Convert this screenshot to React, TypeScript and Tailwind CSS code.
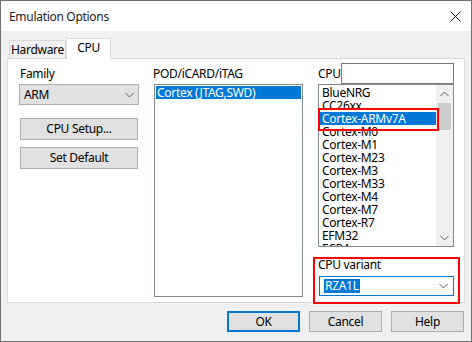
import React from 'react';

const cpus = [
  'BlueNRG',
  'CC26xx',
  'Cortex-ARMv7A',
  'Cortex-M0',
  'Cortex-M1',
  'Cortex-M23',
  'Cortex-M3',
  'Cortex-M33',
  'Cortex-M4',
  'Cortex-M7',
  'Cortex-R7',
  'EFM32',
  'ECP4',
];

const Chevron = ({ up = false }: { up?: boolean }) => (
  <svg width="9" height="6" viewBox="0 0 9 6" className="block">
    <path
      d={up ? 'M0.5 5 L4.5 1 L8.5 5' : 'M0.5 1 L4.5 5 L8.5 1'}
      fill="none"
      stroke="#606060"
      strokeWidth="1"
    />
  </svg>
);

const WinButton = ({ label, primary = false, className = '' }: { label: string; primary?: boolean; className?: string }) => (
  <div
    className={`flex items-center justify-center bg-[#e1e1e1] ${
      primary ? 'border-2 border-[#0078d7]' : 'border border-[#adadad]'
    } ${className}`}
  >
    {label}
  </div>
);

export default function App() {
  return (
    <div
      className="relative w-[472px] h-[342px] flex flex-col border border-[#6f6f6f] bg-[#f0f0f0] text-[12px] leading-[16px] tracking-[-0.3px] text-black overflow-hidden"
      style={{ fontFamily: '"Noto Sans", "Liberation Sans", sans-serif' }}
    >
      {/* Title bar */}
      <div className="h-[30px] bg-white flex items-center justify-between pl-[8px] pr-[10px] shrink-0">
        <span className="text-[12px] text-[#1a1a1a] pt-[1px]">Emulation Options</span>
        <svg width="11" height="11" viewBox="0 0 11 11">
          <path d="M0.5 0.5 L10.5 10.5 M10.5 0.5 L0.5 10.5" stroke="#111" strokeWidth="1" />
        </svg>
      </div>

      {/* Tabs */}
      <div className="flex items-end h-[20px] mt-[7px] ml-[8px] relative z-10">
        <div className="w-[57px] h-[18px] border border-b-0 border-[#d9d9d9] bg-[#f0f0f0] flex items-center justify-center pt-[1px]">
          Hardware
        </div>
        <div className="w-[45px] h-[21px] -mb-px border border-b-0 border-[#d9d9d9] bg-white flex items-start justify-center pt-[1px]">
          CPU
        </div>
      </div>

      {/* Panel */}
      <div className="ml-[6px] w-[458px] h-[245px] border border-[#d9d9d9] bg-white flex shrink-0">
        {/* Family column */}
        <div className="ml-[11px] w-[120px] pt-[7px] flex flex-col">
          <span className="ml-[1px]">Family</span>
          <div className="mt-[2px] h-[21px] border border-[#adadad] bg-[#e1e1e1] flex items-center justify-between pl-[4px] pr-[4px]">
            <span>ARM</span>
            <Chevron />
          </div>
          <WinButton label="CPU Setup..." className="ml-[1px] w-[118px] h-[22px] mt-[13px]" />
          <WinButton label="Set Default" className="ml-[1px] w-[118px] h-[22px] mt-[7px]" />
        </div>

        {/* POD column */}
        <div className="ml-[14px] w-[150px] pt-[7px] flex flex-col">
          <span>POD/iCARD/iTAG</span>
          <div className="mt-[2px] ml-[1px] h-[213px] border border-[#828790] bg-white p-[1px]">
            <div className="h-[13px] leading-[13px] bg-[#0078d7] text-white pl-[1px]">Cortex (JTAG,SWD)</div>
          </div>
        </div>

        {/* CPU column */}
        <div className="ml-[15px] w-[136px] pt-[4px] flex flex-col">
          <div className="flex items-center h-[21px]">
            <span className="w-[23px]">CPU</span>
            <div className="flex-1 h-[21px] border border-[#7a7a7a] bg-white" />
          </div>
          <div className="h-[163px] border border-[#828790] bg-white flex">
            <div className="flex-1 overflow-hidden pt-[1px] pl-[1px]">
              {cpus.map((c) => (
                <div
                  key={c}
                  className={`h-[13px] leading-[13px] pl-[2px] whitespace-nowrap ${
                    c === 'Cortex-ARMv7A' ? 'bg-[#0078d7] text-white' : ''
                  }`}
                >
                  {c}
                </div>
              ))}
            </div>
            <div className="w-[17px] bg-[#f0f0f0] flex flex-col items-center">
              <div className="h-[17px] flex items-center justify-center">
                <Chevron up />
              </div>
              <div className="w-[13px] h-[27px] mt-[1px] bg-[#cdcdcd]" />
              <div className="flex-1" />
              <div className="h-[17px] flex items-center justify-center">
                <Chevron />
              </div>
            </div>
          </div>
          <span className="mt-[10px]">CPU variant</span>
          <div className="mt-[3px] ml-[1px] h-[20px] border border-[#0078d7] bg-white flex items-center justify-between pl-[4px] pr-[5px]">
            <span className="bg-[#0078d7] text-white leading-[14px] px-[1px]">RZA1L</span>
            <Chevron />
          </div>
        </div>
      </div>

      {/* Bottom buttons */}
      <div className="flex justify-end gap-[9px] mt-[8px] mr-[7px]">
        <WinButton label="OK" primary className="w-[73px] h-[21px]" />
        <WinButton label="Cancel" className="w-[73px] h-[21px]" />
        <WinButton label="Help" className="w-[73px] h-[21px]" />
      </div>

      {/* Red annotation boxes */}
      <div className="absolute left-[317px] top-[107px] w-[121px] h-[23px] border-2 border-[#ff0000] pointer-events-none" />
      <div className="absolute left-[312px] top-[256px] w-[147px] h-[47px] border-2 border-[#ff0000] pointer-events-none" />
    </div>
  );
}
